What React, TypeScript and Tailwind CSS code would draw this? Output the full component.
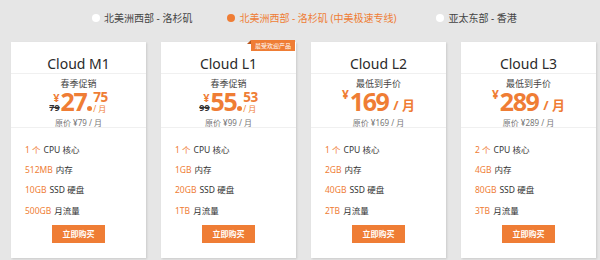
import React from 'react';

const ORANGE = 'text-[#ef7d35]';

type Plan = {
  name: string;
  label: string;
  price: string;
  cents?: string;
  old?: string;
  orig: string;
  specs: [string, string][];
  badge?: boolean;
};

const plans: Plan[] = [
  {
    name: 'Cloud M1',
    label: '春季促销',
    price: '27',
    cents: '75',
    old: '79',
    orig: '¥79',
    specs: [['1 个', 'CPU 核心'], ['512MB', '内存'], ['10GB', 'SSD 硬盘'], ['500GB', '月流量']],
  },
  {
    name: 'Cloud L1',
    label: '春季促销',
    price: '55',
    cents: '53',
    old: '99',
    orig: '¥99',
    specs: [['1 个', 'CPU 核心'], ['1GB', '内存'], ['20GB', 'SSD 硬盘'], ['1TB', '月流量']],
    badge: true,
  },
  {
    name: 'Cloud L2',
    label: '最低到手价',
    price: '169',
    orig: '¥169',
    specs: [['1 个', 'CPU 核心'], ['2GB', '内存'], ['40GB', 'SSD 硬盘'], ['2TB', '月流量']],
  },
  {
    name: 'Cloud L3',
    label: '最低到手价',
    price: '289',
    orig: '¥289',
    specs: [['2 个', 'CPU 核心'], ['4GB', '内存'], ['80GB', 'SSD 硬盘'], ['3TB', '月流量']],
  },
];

// price row is 25px high, digit baseline sits ~3px above its bottom
const Price: React.FC<{ p: Plan }> = ({ p }) => {
  if (p.cents) {
    return (
      <div className={`flex items-stretch justify-center h-[25px] ${ORANGE} font-bold leading-none`}>
        <div className="flex flex-col items-end justify-between pt-[3px] pb-[2px] mr-[1px]">
          <span className="text-[11px] leading-none">¥</span>
          <span className="text-[9px] leading-none text-[#333] line-through">{p.old}</span>
        </div>
        <span className="text-[25px] leading-[25px] tracking-[-1.5px]">{p.price}</span>
        <span className="self-end w-[5px] h-[5px] rounded-full bg-[#ef7d35] mb-[3px] ml-[1px] mr-[1px]" />
        <div className="flex flex-col items-start justify-between pt-[2px] pb-[1px]">
          <span className="text-[13.5px] leading-none tracking-[-0.5px]">{p.cents}</span>
          <span className="text-[8px] leading-none font-normal">/ 月</span>
        </div>
      </div>
    );
  }
  return (
    <div className={`flex items-end justify-center h-[25px] ${ORANGE} font-bold leading-none`}>
      <span className="text-[12px] self-start mr-[1px]">¥</span>
      <span className="text-[25px] leading-[25px] tracking-[-1.5px]">{p.price}</span>
      <span className="text-[13px] ml-[5px] mb-[2px]">/ 月</span>
    </div>
  );
};

const Card: React.FC<{ p: Plan }> = ({ p }) => (
  <div className="relative bg-white w-[135px] h-[216px] shadow-[1px_1px_2px_rgba(0,0,0,0.12)] flex flex-col">
    {p.badge && (
      <div className="absolute -top-[2px] right-[1px] flex">
        <div className="w-0 h-0 border-l-[4px] border-l-transparent border-b-[4px] border-b-[#b8561c] self-start" />
        <div className="bg-[#ef7d35] text-white text-[6px] leading-none px-[4px] pt-[3px] pb-[2px]">最受欢迎产品</div>
      </div>
    )}
    <div className="h-[32px] flex justify-center pt-[15px] border-b border-[#f0f0f0]">
      <span className="text-[14px] text-[#2a2a2a] leading-none">{p.name}</span>
    </div>
    <div className="h-[54px] border-b border-[#f0f0f0] flex flex-col items-center pt-[5px]">
      <span className="text-[9px] text-[#444] leading-none">{p.label}</span>
      <div className="mt-[1px]">
        <Price p={p} />
      </div>
      <span className="text-[8px] text-[#777] leading-none mt-[5px]">原价 {p.orig} / 月</span>
    </div>
    <div className="flex flex-col pl-[14px] pt-[12px]">
      {p.specs.map(([a, b], i) => (
        <div key={i} className="h-[20.3px] flex items-center text-[8.5px] text-[#333]">
          <span className={`${ORANGE} mr-[3px]`}>{a}</span>
          {b}
        </div>
      ))}
    </div>
    <div className="flex justify-center mt-[4px]">
      <button className="bg-[#ef7d35] text-white text-[8px] font-bold w-[53px] h-[18px] leading-none">立即购买</button>
    </div>
  </div>
);

const Radio: React.FC<{ on?: boolean; label: string; className?: string }> = ({ on, label, className }) => (
  <div className={`flex items-center gap-[4px] text-[10px] ${on ? 'text-[#ef7d35]' : 'text-[#444]'} ${className ?? ''}`}>
    <span className={`w-[8px] h-[8px] rounded-full ${on ? 'bg-[#ef7d35]' : 'bg-white'}`} />
    <span>{label}</span>
  </div>
);

export default function App() {
  return (
    <div
      className="w-[600px] h-[260px] bg-[#e6e6e6] overflow-hidden"
      style={{ fontFamily: '"Noto Sans", "Noto Sans CJK SC", sans-serif' }}
    >
      <div className="flex items-center h-[42px] pl-[92px] pb-[6px]">
        <Radio label="北美洲西部 - 洛杉矶" />
        <Radio on label="北美洲西部 - 洛杉矶 (中美极速专线)" className="ml-[35px]" />
        <Radio label="亚太东部 - 香港" className="ml-[40px]" />
      </div>
      <div className="flex gap-[15px] pl-[11px]">
        {plans.map((p) => (
          <Card key={p.name} p={p} />
        ))}
      </div>
    </div>
  );
}
